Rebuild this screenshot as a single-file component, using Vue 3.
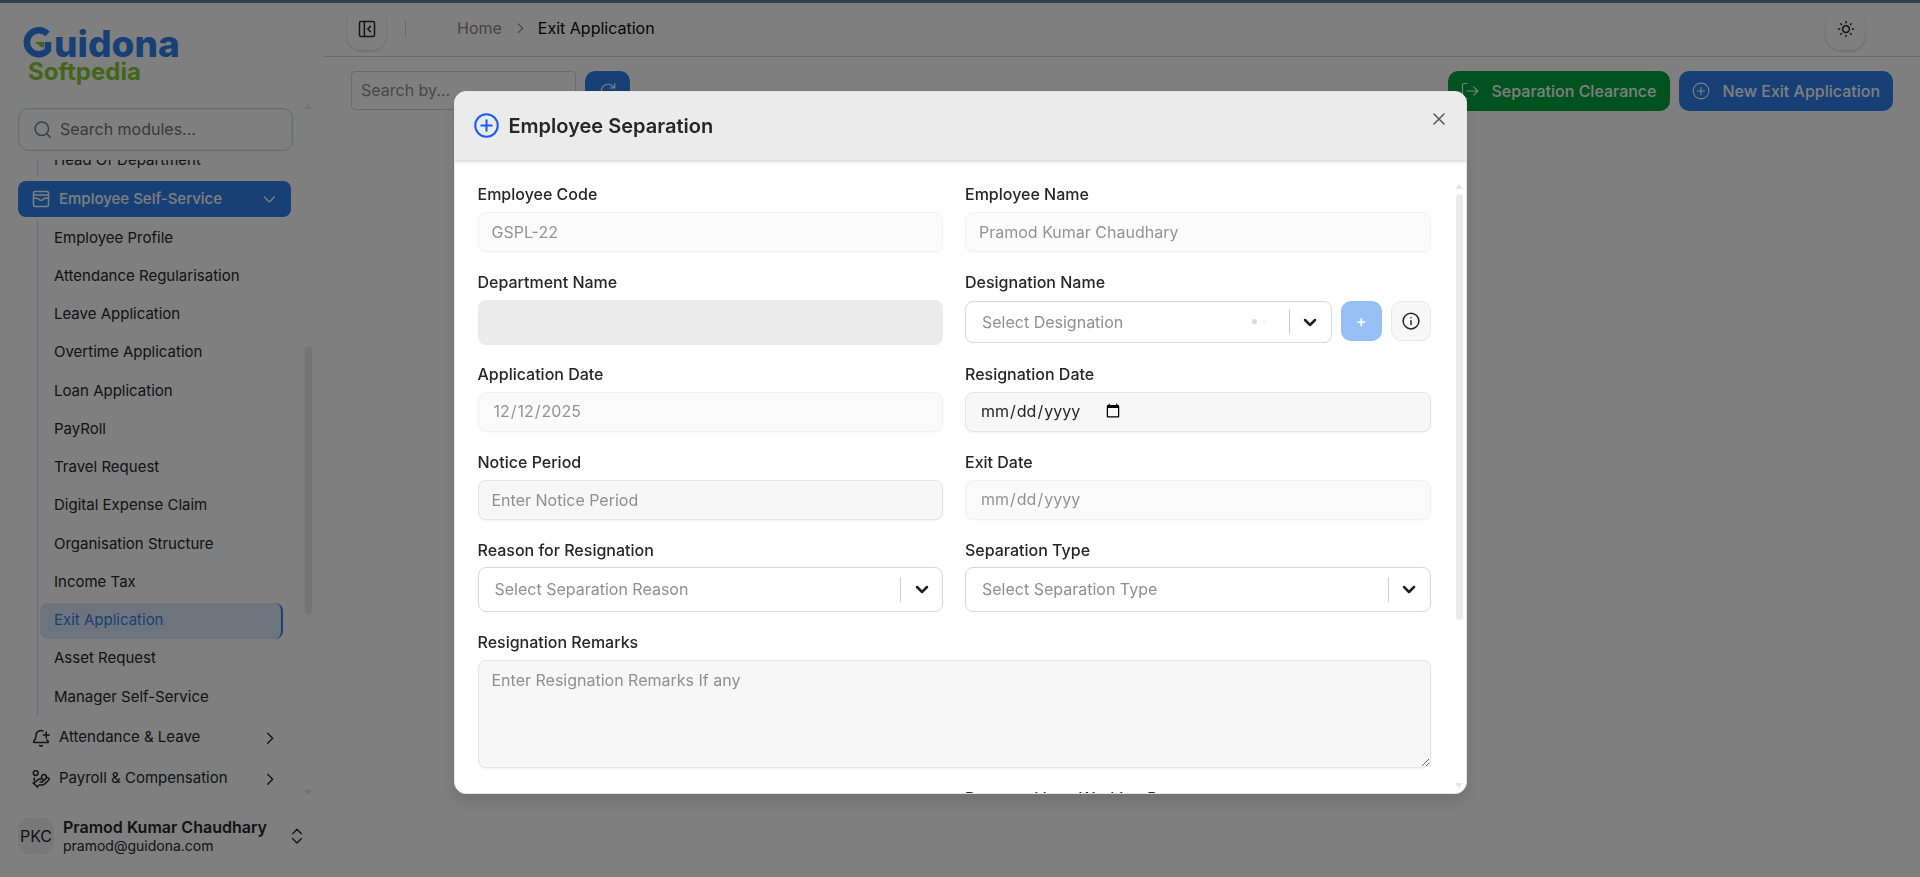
<script setup>
import { ref } from 'vue'

const modules = [
  'Employee Profile', 'Attendance Regularisation', 'Leave Application', 'Overtime Application',
  'Loan Application', 'PayRoll', 'Travel Request', 'Digital Expense Claim',
  'Organisation Structure', 'Income Tax', 'Exit Application', 'Asset Request', 'Manager Self-Service'
]
const current = 'Exit Application'
const code = ref('GSPL-22')
const name = ref('Pramod Kumar Chaudhary')
const applied = ref('2025-12-12')
</script>

<template>
  <div class="app">
    <aside class="sidebar">
      <div class="brand">
        <svg class="logo" width="160" height="70" viewBox="0 0 160 70" role="img" aria-label="Guidona Softpedia">
          <path d="M23.500 12A12 12 0 1 0 24 28V20" fill="none" stroke="#2f80ed" stroke-width="6.500" />
          <path d="M11 20H20V25.500L17 25Z" fill="#88c832" />
          <text class="logo-top" x="30" y="35">uidona</text>
          <text class="logo-bottom" x="4" y="58">Softpedia</text>
        </svg>
      </div>
      <div class="search">
        <svg width="17" height="17" viewBox="0 0 24 24" class="line"><circle cx="11" cy="11" r="9.500" /><path d="m18 18 5 5" /></svg>
        <input type="text" placeholder="Search modules..." aria-label="Search modules" />
      </div>
      <div class="nav-wrap">
        <nav class="nav">
          <ul class="sub clipped"><li><a href="#">Head Of Department</a></li></ul>
          <button class="group open" type="button">
            <svg class="line" width="18" height="18" viewBox="0 0 24 24"><rect x="2" y="2" width="20" height="20" rx="2" /><path d="M2 6.500h20M2 11h5c1.500 0 2 3 5 3s3.500-3 5-3h5" /></svg>
            <span>Employee Self-Service</span>
            <svg class="line chev" width="16" height="16" viewBox="0 0 24 24"><path d="m5 9 7.500 7.500L20 9" /></svg>
          </button>
          <ul class="sub list">
            <li v-for="m in modules" :key="m"><a href="#" :class="{ active: m === current }">{{ m }}</a></li>
          </ul>
          <button class="group" type="button">
            <svg class="line" width="18" height="18" viewBox="0 0 24 24"><path d="M10.300 22a2 2 0 0 0 3.400 0M15 8h8M19 4v8M20 14.500a9 9 0 0 0 1.700 2A1 1 0 0 1 21 18H3a1 1 0 0 1-.7-1.700C3.600 14.900 5.500 12.500 5.500 8.500a6.500 6.500 0 0 1 9.200-6" /></svg>
            <span>Attendance &amp; Leave</span>
            <svg class="line chev" width="16" height="16" viewBox="0 0 24 24"><path d="m10 5 7.500 7.500L10 20" /></svg>
          </button>
          <button class="group" type="button">
            <svg class="line" width="18" height="18" viewBox="0 0 24 24"><circle cx="5" cy="4" r="3.200" /><path d="M13 10.500a3.200 3.200 0 1 1 5.800 0M11 16h2a2 2 0 1 0 0-4h-3c-.6 0-1.100.2-1.400.6L2 18M7 22.500l1.600-1.900c.3-.4.8-.6 1.400-.6h4c1.100 0 2.100-.4 2.800-1.200l5.500-5.400a2 2 0 0 0-2.700-2.900l-4.700 3.900M1.500 17l6 6M3 14V10.500" /></svg>
            <span>Payroll &amp; Compensation</span>
            <svg class="line chev" width="16" height="16" viewBox="0 0 24 24"><path d="m10 5 7.500 7.500L10 20" /></svg>
          </button>
        </nav>
        <div class="rail"><i class="up"></i><i class="thumb"></i><i class="down"></i></div>
      </div>
      <button class="user" type="button">
        <span class="avatar">PKC</span>
        <span class="who"><strong>Pramod Kumar Chaudhary</strong><small>pramod@guidona.com</small></span>
        <svg class="line" width="16" height="16" viewBox="0 0 24 24"><path d="m5.500 8.500 6.500-6.500 6.500 6.500M5.500 16l6.500 6.500 6.500-6.500" /></svg>
      </button>
    </aside>

    <main class="main">
      <header class="topbar">
        <button class="round" type="button" aria-label="Collapse sidebar">
          <svg class="line" width="18" height="18" viewBox="0 0 24 24"><rect x="2" y="2" width="20" height="20" rx="2" /><path d="M8.500 2v20M16.500 8.500 13 12l3.500 3.500" /></svg>
        </button>
        <span class="divider"></span>
        <nav class="crumbs" aria-label="Breadcrumb">
          <a href="#">Home</a>
          <svg class="line" width="14" height="14" viewBox="0 0 24 24"><path d="m9 5 7.500 7.500L9 20" /></svg>
          <span>Exit Application</span>
        </nav>
        <button class="round sun" type="button" aria-label="Toggle theme">
          <svg class="line" width="18" height="18" viewBox="0 0 24 24"><circle cx="12" cy="12" r="4.500" /><path d="M12 2v1.500M12 20.500V22M2 12h1.500M20.500 12H22M5 5l1 1M18 18l1 1M5 19l1-1M18 6l1-1" /></svg>
        </button>
      </header>
      <div class="toolbar">
        <input class="filter" type="text" placeholder="Search by..." aria-label="Search by" />
        <button class="btn icon-only" type="button" aria-label="Refresh">
          <svg class="line" width="18" height="18" viewBox="0 0 24 24"><path d="M21 12a9 9 0 1 1-3-6.700L21 8M21 2v6h-6" /></svg>
        </button>
        <span class="spacer"></span>
        <button class="btn green" type="button">
          <svg class="line" width="18" height="18" viewBox="0 0 24 24"><path d="M8 2H4a2 2 0 0 0-2 2v16a2 2 0 0 0 2 2h4M8 12h14M17 6.500l5.500 5.500-5.500 5.500" /></svg>
          Separation Clearance
        </button>
        <button class="btn" type="button">
          <svg class="line" width="18" height="18" viewBox="0 0 24 24"><circle cx="12" cy="12" r="10.500" /><path d="M12 7v10M7 12h10" /></svg>
          New Exit Application
        </button>
      </div>
    </main>
  </div>

  <div class="overlay">
    <section class="dialog" role="dialog" aria-modal="true" aria-labelledby="dialog-title">
      <header class="dialog-head">
        <svg class="line head-icon" width="25" height="25" viewBox="0 0 24 24"><circle cx="12" cy="12" r="10.800" /><path d="M12 7v10M7 12h10" /></svg>
        <h2 id="dialog-title">Employee Separation</h2>
        <button class="close" type="button" aria-label="Close">
          <svg class="line" width="14" height="14" viewBox="0 0 14 14"><path d="m2 2 10 10M12 2 2 12" /></svg>
        </button>
      </header>
      <div class="dialog-body">
        <form class="form" @submit.prevent>
          <div class="field"><label for="code">Employee Code</label><input id="code" v-model="code" class="control" type="text" disabled /></div>
          <div class="field"><label for="name">Employee Name</label><input id="name" v-model="name" class="control" type="text" disabled /></div>
          <div class="field"><label for="dept">Department Name</label><input id="dept" class="skeleton" type="text" disabled /></div>
          <div class="field">
            <label for="desig">Designation Name</label>
            <div class="combo">
              <div class="select short">
                <select id="desig"><option>Select Designation</option></select>
                <span class="dots"><i></i><i></i></span>
                <span class="caret"><svg class="line" width="16" height="16" viewBox="0 0 16 16"><path d="m3 6 5 5 5-5" /></svg></span>
              </div>
              <button class="btn add" type="button" disabled>+</button>
              <button class="info" type="button" aria-label="Information">
                <svg class="line" width="18" height="18" viewBox="0 0 24 24"><circle cx="12" cy="12" r="10.500" /><path d="M12 11.500v5M12 7.500v.1" /></svg>
              </button>
            </div>
          </div>
          <div class="field"><label for="applied">Application Date</label><input id="applied" v-model="applied" class="control date" type="date" disabled /></div>
          <div class="field"><label for="resigned">Resignation Date</label><input id="resigned" class="control date" type="date" /></div>
          <div class="field"><label for="notice">Notice Period</label><input id="notice" class="control" type="text" placeholder="Enter Notice Period" /></div>
          <div class="field"><label for="exit">Exit Date</label><input id="exit" class="control date" type="date" disabled /></div>
          <div class="field">
            <label for="reason">Reason for Resignation</label>
            <div class="select">
              <select id="reason"><option>Select Separation Reason</option></select>
              <span class="caret"><svg class="line" width="16" height="16" viewBox="0 0 16 16"><path d="m3 6 5 5 5-5" /></svg></span>
            </div>
          </div>
          <div class="field">
            <label for="type">Separation Type</label>
            <div class="select">
              <select id="type"><option>Select Separation Type</option></select>
              <span class="caret"><svg class="line" width="16" height="16" viewBox="0 0 16 16"><path d="m3 6 5 5 5-5" /></svg></span>
            </div>
          </div>
          <div class="field wide"><label for="remarks">Resignation Remarks</label><textarea id="remarks" class="control" placeholder="Enter Resignation Remarks If any"></textarea></div>
          <div class="field last"><label for="lastday">Proposed Last Working Day</label><input id="lastday" class="control date" type="date" /></div>
        </form>
        <div class="rail"><i class="up"></i><i class="thumb"></i><i class="down"></i></div>
      </div>
    </section>
  </div>
</template>

<style>
body { margin: 0; background: #fff; }
</style>

<style scoped>
* { box-sizing: border-box; }
.app, .overlay { font-family: Inter, "Liberation Sans", sans-serif; font-size: 16px; color: #262626; }
button, input, select, textarea { font: inherit; color: inherit; margin: 0; }
button { border: 0; background: none; padding: 0; }
a { color: inherit; text-decoration: none; }
ul { list-style: none; margin: 0; padding: 0; }
.line { fill: none; stroke: currentColor; stroke-width: 2; stroke-linecap: round; stroke-linejoin: round; flex: none; }

.app { display: flex; height: 100vh; border-top: 3px solid #64809f; overflow: hidden; }
.sidebar { width: 324px; flex: none; display: flex; flex-direction: column; }
.brand { height: 105px; flex: none; padding: 19px 0 0 24px; }
.logo { display: block; overflow: visible; }
.logo-top, .logo-bottom { font-family: Inter, sans-serif; font-weight: 800; }
.logo-top { font-size: 37px; fill: #2f80ed; }
.logo-bottom { font-size: 24px; fill: #88c832; font-weight: 700; }
.search { display: flex; align-items: center; gap: 9px; height: 43px; flex: none; margin: 0 31px 0 18px; padding: 0 15px 1px; border: 1px solid #c8d6ee; border-radius: 10px; box-shadow: inset 0 0 3px #e2e6ec; color: #737b8c; }
.search input { flex: 1; min-width: 0; border: 0; padding: 0; background: none; outline: 0; }
input::placeholder, textarea::placeholder { color: #8f8f8f; opacity: 1; }
.search input::placeholder { color: #737373; }
.nav-wrap { flex: 1; min-height: 0; display: flex; margin-top: 9px; justify-content: space-between; }
.nav { width: 291px; padding-left: 18px; font-size: 15px; overflow: hidden; }
.sub { margin-left: 19px; border-left: 1px solid #d0dcf3; padding: 0 8px 2px 2px; }
.sub a { display: flex; align-items: center; height: 36px; padding: 0 14px 2px; border-radius: 8px; }
.sub a.active { background: #dbe8fc; color: #2f80ed; border-right: 2px solid #2f80ed; }
.list { display: flex; flex-direction: column; justify-content: space-between; height: 497px; }
.sub.clipped { height: 17px; display: flex; align-items: flex-end; margin-bottom: 4px; padding-bottom: 0; }
.clipped a { padding-bottom: 0; }
.group { display: flex; align-items: center; gap: 9px; width: 100%; height: 41px; padding: 0 14px; text-align: left; }
.group span { flex: 1; padding-bottom: 2px; }
.group.open { height: 36px; margin-bottom: 3px; background: #2f80ed; color: #fff; border-radius: 8px; font-weight: 500; }
.rail { position: relative; width: 9px; flex: none; }
.rail i { position: absolute; left: 0; }
.nav-wrap .rail { margin: -56px 11px 0 0; }
.up, .down { border-left: 4px solid transparent; border-right: 4px solid transparent; }
.up { top: 0; border-bottom: 5px solid #e5e5e5; }
.down { bottom: 0; border-top: 5px solid #e5e5e5; }
.rail .thumb { left: 1px; width: 7px; border-radius: 4px; background: #ebebeb; }
.nav-wrap .thumb { top: 35%; height: 39%; }
.user { display: flex; align-items: center; height: 82px; flex: none; padding: 0 19px 0 18px; gap: 9px; text-align: left; }
.avatar { width: 36px; height: 36px; border-radius: 10px; background: #f0f0f0; display: grid; place-items: center; }
.who { flex: 1; display: flex; flex-direction: column; }
.who strong { font-size: 16px; line-height: 20px; font-weight: 600; white-space: nowrap; }
.who small { font-size: 14px; line-height: 18px; }

.main { flex: 1; min-width: 0; }
.topbar { display: flex; align-items: center; height: 54px; padding: 0 55px 1px 23px; border-bottom: 1px solid #d4d4d4; }
.round { width: 39px; height: 41px; border-radius: 14px; display: grid; place-items: center; box-shadow: 0 1px 3px rgba(0, 0, 0, .2); }
.sun { margin-left: auto; }
.divider { width: 1px; height: 18px; background: #d4d4d4; margin: 0 51px 0 19px; }
.crumbs { display: flex; align-items: center; gap: 11px; color: #8a8a8a; padding-bottom: 2px; }
.crumbs span { color: #0a0a0a; }
.toolbar { display: flex; gap: 9px; padding: 14px 27px 0; }
.filter { width: 225px; height: 39px; padding: 0 9px 1px; border: 1px solid #d4d4d4; border-radius: 4px; background: none; }
.spacer { flex: 1; }
.btn { display: flex; align-items: center; justify-content: center; gap: 13px; height: 40px; padding: 0 13px; border-radius: 10px; background: #2f80ed; color: #fff; font-weight: 500; white-space: nowrap; }
.icon-only { width: 45px; }
.green { background: #00a63e; }
.toolbar .line { stroke-width: 1.500; }

.overlay { position: fixed; inset: 0; display: grid; place-items: center; padding-top: 8px; background: rgba(0, 0, 0, .5); }
.dialog { width: 1013px; max-width: 96vw; height: calc(80vh + 2px); display: flex; flex-direction: column; overflow: hidden; background: #fff; border: 1px solid #e5e5e5; border-radius: 12px; box-shadow: 0 10px 15px rgba(0, 0, 0, .1); }
.dialog-head { display: flex; align-items: center; gap: 10px; height: 69px; flex: none; padding: 0 18px 0 19px; background: #ebebeb; border-bottom: 1px solid #e0e0e0; box-shadow: 0 1px 3px rgba(0, 0, 0, .15); }
.head-icon { color: #155dfc; }
h2 { margin: 0; flex: 1; font-size: 20px; font-weight: 600; }
.close { align-self: flex-start; width: 18px; height: 18px; margin-top: 18px; display: grid; place-items: center; color: #555; }
.close .line { stroke-width: 1.500; }
.dialog-body { flex: 1; min-height: 0; display: flex; padding-top: 23px; overflow: hidden; }
.form { flex: 1; display: grid; grid-template-columns: 1fr 1fr; gap: 20px 22px; align-content: start; padding: 0 24px 0 23px; }
.field { display: flex; flex-direction: column; gap: 8px; min-width: 0; }
.wide { grid-column: 1 / -1; }
.last { grid-column: 2; }
label { font-weight: 500; line-height: 20px; }
.control { height: 40px; width: 100%; padding: 0 13px; border: 1px solid #e5e5e5; border-radius: 8px; background: #f7f7f7; box-shadow: 0 1px 2px rgba(0, 0, 0, .05); outline: 0; }
.control.date { padding: 0 14px 1px; }
.control:disabled { opacity: .5; }
.control::-webkit-datetime-edit { flex: none; }
textarea.control { display: block; height: 108px; padding: 7px 13px; line-height: 24px; resize: vertical; }
.skeleton { height: 45px; margin-bottom: -1px; border: 0; border-radius: 8px; background: #ebebeb; }
.combo { display: flex; gap: 9px; height: 44px; padding-top: 1px; }
.select { display: flex; align-items: center; flex: 1; height: 45px; border: 1px solid #d8d8d8; border-radius: 8px; }
.field > .select { flex: none; margin-top: -1px; }
.select.short { height: 42px; }
.select select { flex: 1; align-self: stretch; min-width: 0; appearance: none; border: 0; padding: 0 16px; background: none; color: #8f8f8f; outline: 0; }
.caret { display: grid; place-items: center; width: 42px; height: 25px; border-left: 1px solid #ccc; color: #1f1f1f; }
.caret .line { stroke-width: 2.500; }
.dots { display: flex; gap: 5px; margin-right: 22px; }
.dots i { width: 5px; height: 5px; border-radius: 50%; background: #d9d9d9; }
.dots i + i { background: #f8f8f8; }
.add { width: 41px; opacity: .5; padding: 0; }
.info { width: 40px; height: 40px; display: grid; place-items: center; border: 1px solid #e8e8e8; border-radius: 10px; background: #f7f7f7; }
.dialog-body .rail { margin-right: 2px; }
.dialog-body .thumb { top: 10px; height: 70%; }
.dialog-body .down { bottom: 5px; }
</style>
